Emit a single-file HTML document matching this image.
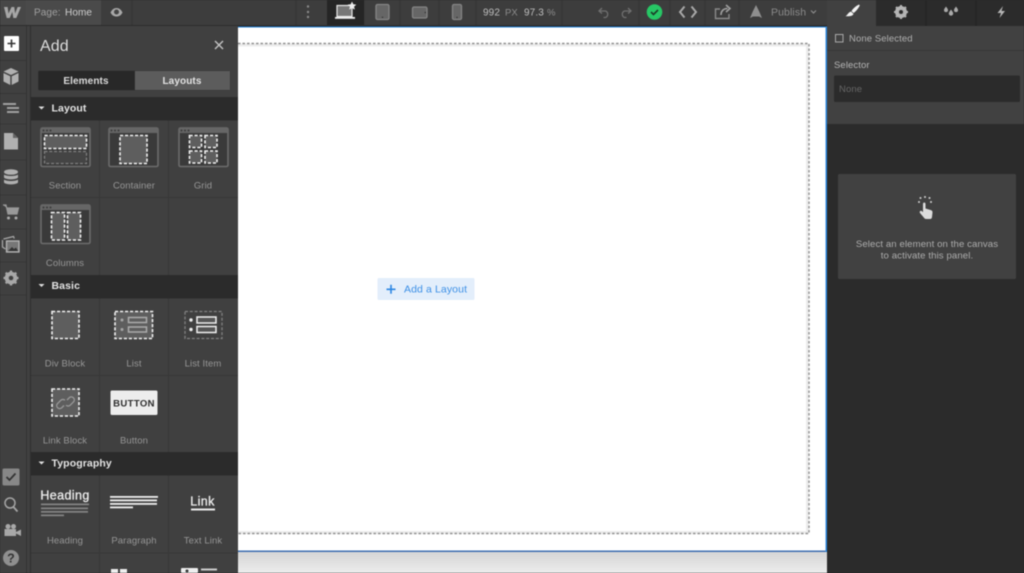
<!DOCTYPE html>
<html><head><meta charset="utf-8"><style>
html,body{margin:0;padding:0;background:#2b2b2b;overflow:hidden;width:1024px;height:573px}
svg{display:block;filter:blur(.4px)}
text{font-family:"Liberation Sans",sans-serif;font-size:9.5px;letter-spacing:.1px}
.l{fill:#969696;text-anchor:middle;font-size:9.5px}
.h{fill:#e4e4e4;font-size:10.5px;font-weight:700}
.d{fill:none;stroke:#f2f2f2;stroke-width:1.6;stroke-dasharray:3.2 1.8}
.f{fill:#5e5e5e}
.w{fill:#3a3a3a;stroke:#6c6c6c;stroke-width:1.6}
</style></head><body>
<svg width="1024" height="573" viewBox="0 0 1024 573" xmlns="http://www.w3.org/2000/svg">
<defs><linearGradient id="g" x1="0" y1="0" x2="0" y2="1"><stop offset="0" stop-color="#d6d6d6"/><stop offset="1" stop-color="#ececec"/></linearGradient></defs>
<!-- canvas -->
<rect x="238" y="26" width="589" height="547" fill="#fff"/>
<rect x="238" y="26" width="589" height="1.500" fill="#1f7fd6"/>
<rect x="238" y="552" width="589" height="21" fill="url(#g)"/>
<rect x="238" y="550.500" width="589" height="1.500" fill="#3e6fb0"/>
<rect x="825.500" y="26" width="1.500" height="526" fill="#2f8ae0"/>
<path d="M238 45H807.500V532.500H238" fill="none" stroke="#ececec" stroke-width="3"/>
<path d="M238 43.500H809V533.500H238" fill="none" stroke="#8f8f8f" stroke-width="1.400" stroke-dasharray="2.500 2"/>
<!-- add a layout -->
<rect x="377.500" y="278" width="97" height="22" rx="1.500" fill="#e3eefb"/>
<path d="M386.500 289.300h9M391 284.800v9" stroke="#2b86e3" stroke-width="1.600"/>
<text x="404" y="292.500" fill="#3d90e6" style="font-size:10.500px">Add a Layout</text>

<!-- top bar -->
<rect width="827" height="26" fill="#3d3d3d"/>
<rect y="25" width="827" height="1.500" fill="#2c2c2c"/>
<rect width="26" height="25" fill="#474747"/>
<rect x="26" width="75" height="25" fill="#4a4a4a"/>
<path d="M4 7h3.600l.9 6.500L11.500 7h2.800l.8 6.500L17.600 7H21l-4.700 11h-3l-1-6-2.600 6h-3z" fill="#a6a6a6"/>
<text x="34" y="15.500" fill="#a0a0a0" style="font-size:10px">Page:</text>
<text x="65" y="15.500" fill="#cfcfcf" style="font-size:10px">Home</text>
<path d="M110.500 12.500c1.500-3 3.500-4.500 6-4.500s4.500 1.500 6 4.500c-1.500 3-3.500 4-6 4s-4.500-1-6-4z" fill="#a8a8a8"/>
<circle cx="116.500" cy="12" r="2.500" fill="#444"/>
<path d="M132 0V25M296 0V25M364 0V25M400 0V25M439 0V25M476 0V25M562 0V25M639 0V25M670 0V25M705 0V25M739 0V25" stroke="#353535" stroke-width="1"/>
<circle cx="308" cy="6.500" r="1.200" fill="#8a8a8a"/><circle cx="308" cy="12" r="1.200" fill="#8a8a8a"/><circle cx="308" cy="17" r="1.200" fill="#8a8a8a"/>
<rect x="327" width="37" height="25" fill="#252525"/>
<rect x="337" y="5.500" width="15" height="11" fill="#777" stroke="#e8e8e8" stroke-width="1.200"/>
<rect x="335" y="17" width="20" height="1.800" fill="#eee"/>
<path d="M352 1.500l1.300 2.800 3 .3-2.200 2 .7 3-2.800-1.600-2.800 1.600.7-3-2.200-2 3-.3z" fill="#eee"/>
<rect x="376" y="4.500" width="13" height="15" rx="1.500" fill="#666" stroke="#858585" stroke-width="1.300"/>
<circle cx="382.500" cy="17.300" r=".7" fill="#333"/>
<rect x="412.500" y="7" width="14.500" height="11" rx="1.500" fill="#666" stroke="#858585" stroke-width="1.300"/>
<circle cx="425.300" cy="12.500" r=".7" fill="#333"/>
<rect x="452.500" y="4.500" width="9" height="15" rx="1.500" fill="#666" stroke="#858585" stroke-width="1.300"/>
<circle cx="457" cy="17.500" r=".7" fill="#333"/>
<text x="483" y="15.500" fill="#bdbdbd" style="font-size:10px">992</text>
<text x="505" y="15.500" fill="#8d8d8d" style="font-size:9.500px">PX</text>
<text x="524" y="15.500" fill="#bdbdbd" style="font-size:10px">97.3</text>
<text x="547" y="15.500" fill="#8d8d8d" style="font-size:9.500px">%</text>
<!-- undo redo -->
<path d="M602 8l-3 3 3 2.500M599.500 11h6a3.500 3.500 0 0 1 0 6.500h-2" fill="none" stroke="#6f6f6f" stroke-width="1.300"/>
<path d="M628 8l3 3-3 2.500M630.500 11h-6a3.500 3.500 0 0 0 0 6.500h2" fill="none" stroke="#6f6f6f" stroke-width="1.300"/>
<circle cx="654.500" cy="12" r="7.800" fill="#27c765"/>
<path d="M651 12l2.500 2.500 4.500-4.500" fill="none" stroke="#1c3c28" stroke-width="1.600"/>
<path d="M684.500 6.500L680 12l4.500 5.500M691.500 6.500L696 12l-4.500 5.500" fill="none" stroke="#a8a8a8" stroke-width="2"/>
<path d="M720 9h-4.500v9.500h13.500V14" fill="none" stroke="#8a8a8a" stroke-width="1.400"/>
<path d="M721 15c0-4 2.500-6.500 6.500-6.500M726 5l4 3.500-4 3.500" fill="none" stroke="#a0a0a0" stroke-width="1.600"/>
<path d="M756 5l3 6 3 7-3-1.500h-6L750 18l3-7z" fill="#8f8f8f"/>
<text x="771" y="15.500" fill="#8b8b8b" style="font-size:10.500px">Publish</text>
<path d="M811 10.500l2.500 2.500 2.500-2.500" fill="none" stroke="#8b8b8b" stroke-width="1.200"/>

<!-- right panel -->
<rect x="827" width="197" height="573" fill="#2b2b2b"/>
<rect x="827" y="26" width="197" height="98" fill="#414141"/>
<rect x="827" width="49" height="27" fill="#414141"/>
<path d="M926 0V26M976 0V26" stroke="#222" stroke-width="1"/>
<rect x="827" y="50" width="197" height="1" fill="#373737"/>
<path d="M859 4.500c-3 1.500-6 4-7.500 6.500l2 2c2.500-1.500 5-5 6.300-7.500z" fill="#f2f2f2"/>
<path d="M851 11.500l2.500 2.500c-1 2-3.500 2.500-8 2.200 2-1 2.500-3.700 5.500-4.700z" fill="#f2f2f2"/>
<circle cx="901" cy="12" r="4.500" fill="none" stroke="#b5b5b5" stroke-width="3"/>
<path d="M901 5v14M894 12h14M896 7l10 10M906 7L896 17" stroke="#b5b5b5" stroke-width="2"/>
<circle cx="901" cy="12" r="2" fill="#2b2b2b"/>
<path d="M951 7.500c1.500 2 2.200 3 2.200 4a2.200 2.200 0 0 1-4.400 0c0-1 .7-2 2.200-4z" fill="#aaa" transform="translate(0 2)"/>
<path d="M946 6.500c1.300 1.800 2 2.700 2 3.600a2 2 0 0 1-4 0c0-.9.7-1.800 2-3.600zM956 6.500c1.300 1.800 2 2.700 2 3.600a2 2 0 0 1-4 0c0-.9.700-1.800 2-3.600z" fill="#aaa"/>
<path d="M1003 6l-5.500 7h3.500l-1.500 5 5.500-7h-3.500z" fill="#b5b5b5"/>
<rect x="835.500" y="34.500" width="7.500" height="7.500" fill="none" stroke="#a8a8a8" stroke-width="1"/>
<text x="849" y="41.500" fill="#b0b0b0" style="font-size:9.500px">None Selected</text>
<text x="834" y="68" fill="#b5b5b5" style="font-size:9.500px">Selector</text>
<rect x="834" y="75.500" width="186" height="26.500" rx="1.500" fill="#2b2b2b"/>
<text x="839" y="92" fill="#666" style="font-size:9.500px">None</text>
<rect x="838" y="174" width="178" height="105" rx="1.500" fill="#414141"/>
<path d="M923 204c0-2 2.500-2 2.500 0v4.500l5 1.500c1.500.5 2 1 2 2.500l-.5 4.500c-.2 1.500-1 2-2 2h-4c-1 0-1.500-.5-2-1.200L920 213c-1-1.500.8-3 2-1.800l1 1z" fill="#dcdcdc"/>
<g fill="#cfcfcf"><circle cx="925" cy="197" r="1"/><circle cx="929.500" cy="198" r="1"/><circle cx="920.500" cy="198" r="1"/><circle cx="919" cy="202" r="1"/><circle cx="931" cy="202" r="1"/></g>
<text x="927" y="247" fill="#adadad" text-anchor="middle" style="font-size:9.600px">Select an element on the canvas</text>
<text x="927" y="258.500" fill="#adadad" text-anchor="middle" style="font-size:9.600px">to activate this panel.</text>

<!-- left rail -->
<rect y="26" width="31" height="547" fill="#404040"/>
<rect x="26" y="26" width="1" height="547" fill="#333"/>
<rect x="30" y="26" width="1.500" height="547" fill="#2f2f2f"/>
<rect x="4" y="36" width="15" height="15" rx="1" fill="#fff"/>
<path d="M7.500 43.500h8M11.500 39.500v8" stroke="#333" stroke-width="1.600"/>
<path d="M0 60.500H26M0 93.500H26M0 124H26M0 160H26M0 195H26M0 229H26M0 262H26M0 295H26" stroke="#363636" stroke-width="1"/>
<path d="M11 68l7.500 3.500-7.500 3.500-7.500-3.500z" fill="#b0b0b0"/>
<path d="M3.500 73l6.800 3.300V85l-6.800-3.500zM18.500 73l-6.800 3.300V85l6.800-3.500z" fill="#b0b0b0"/>
<rect x="3" y="103" width="13" height="2" fill="#a0a0a0"/><rect x="7" y="107" width="12" height="2" fill="#a0a0a0"/><rect x="7" y="111" width="12" height="2" fill="#a0a0a0"/>
<path d="M4 133h9l5 5v11.500H4z" fill="#b0b0b0"/>
<path d="M13 133l5 5h-5z" fill="#666"/>
<ellipse cx="11" cy="172" rx="7" ry="2.800" fill="#b0b0b0"/>
<path d="M4 174.500c2 2 12 2 14 0v3c-2 2.500-12 2.500-14 0zM4 179.500c2 2 12 2 14 0v3c-2 2.500-12 2.500-14 0z" fill="#b0b0b0"/>
<path d="M3 205h3l2 9h9l1.500-6H7" fill="#999" stroke="#999" stroke-width="1.200"/>
<circle cx="8.500" cy="218" r="1.500" fill="#aaa"/><circle cx="16" cy="218" r="1.500" fill="#aaa"/>
<path d="M3.500 239l10-2.500.8 2" fill="none" stroke="#a8a8a8" stroke-width="1.200"/>
<path d="M2.500 240v7l3 2" fill="none" stroke="#a8a8a8" stroke-width="1.200"/>
<rect x="6.500" y="241" width="12.500" height="11" fill="#777" stroke="#b5b5b5" stroke-width="1.300"/>
<path d="M8 251l4-4 2 2 2-1.500 2 3.500z" fill="#333"/>
<circle cx="11" cy="278" r="4.800" fill="none" stroke="#a8a8a8" stroke-width="3"/>
<path d="M11 270.500v15M3.500 278h15M5.700 272.700l10.600 10.600M16.300 272.700L5.700 283.300" stroke="#a8a8a8" stroke-width="2.200"/>
<circle cx="11" cy="278" r="2.300" fill="#404040"/>
<rect x="2.500" y="468.500" width="17" height="17" rx="1.500" fill="#878787"/>
<path d="M6.500 477l3 3 6-6.500" fill="none" stroke="#333" stroke-width="1.800"/>
<circle cx="10" cy="503" r="5" fill="none" stroke="#a5a5a5" stroke-width="1.500"/>
<path d="M13.500 507l4 4.500" stroke="#a5a5a5" stroke-width="1.800"/>
<circle cx="8" cy="526.500" r="2.500" fill="#a8a8a8"/><circle cx="13.500" cy="526.500" r="2.500" fill="#a8a8a8"/>
<rect x="4.500" y="529" width="11.500" height="7" fill="#a8a8a8"/><path d="M16 532l5-2.500v6.500l-5-2.500z" fill="#a8a8a8"/>
<circle cx="11" cy="558" r="8" fill="#8f8f8f"/>
<text x="11" y="562.500" fill="#333" text-anchor="middle" style="font-size:12.500px;font-weight:700">?</text>

<!-- add panel -->
<rect x="31" y="26" width="207" height="547" fill="#404040"/>
<text x="40" y="51" fill="#dcdcdc" style="font-size:16px">Add</text>
<path d="M215 41l8 8M223 41l-8 8" stroke="#c4c4c4" stroke-width="1.400"/>
<rect x="38" y="70.500" width="192.500" height="20" rx="1.500" fill="#333"/>
<rect x="38.500" y="71" width="96" height="19" rx="1" fill="#282828"/>
<rect x="135" y="71" width="95" height="19" fill="#5c5c5c"/>
<text x="86" y="84" fill="#dadada" text-anchor="middle" style="font-size:10px;font-weight:700">Elements</text>
<text x="182" y="84" fill="#e2e2e2" text-anchor="middle" style="font-size:10px;font-weight:700">Layouts</text>

<rect x="31" y="97" width="207" height="23.500" fill="#2b2b2b"/>
<rect x="31" y="275" width="207" height="23.500" fill="#2b2b2b"/>
<rect x="31" y="452" width="207" height="23.500" fill="#2b2b2b"/>
<path d="M38.500 106.500h6l-3 3zM38.500 284h6l-3 3zM38.500 461.500h6l-3 3z" fill="#ddd"/>
<text x="51.500" y="111.500" class="h">Layout</text>
<text x="51.500" y="289" class="h">Basic</text>
<text x="51.500" y="466.500" class="h">Typography</text>
<path d="M99.500 120.500V275M168.500 120.500V275M99.500 298.500V452M168.500 298.500V452M99.500 475.500V573M168.500 475.500V573M31 197.500H238M31 375.500H238M31 553H238" stroke="#383838" stroke-width="1"/>

<!-- section -->
<rect x="41" y="128" width="49" height="38.500" rx="1.500" class="w"/>
<rect x="41" y="128" width="49" height="5" fill="#666"/>
<rect x="44.500" y="135.500" width="42" height="13" class="f"/><rect x="44.500" y="135.500" width="42" height="13" class="d"/>
<rect x="44.500" y="151.500" width="42" height="12" fill="#444" stroke="#808080" stroke-width="1.300" stroke-dasharray="3 1.800"/>
<!-- container -->
<rect x="109" y="128" width="49" height="38.500" rx="1.500" class="w"/>
<rect x="109" y="128" width="49" height="5" fill="#666"/>
<rect x="120" y="135.500" width="27" height="28" class="f"/><rect x="120" y="135.500" width="27" height="28" class="d"/>
<!-- grid -->
<rect x="179" y="128" width="49" height="38.500" rx="1.500" class="w"/>
<rect x="179" y="128" width="49" height="5" fill="#666"/>
<g class="f"><rect x="190" y="136" width="11" height="11"/><rect x="205.500" y="136" width="11" height="11"/><rect x="190" y="151.500" width="11" height="11"/><rect x="205.500" y="151.500" width="11" height="11"/></g>
<rect x="189.500" y="135.500" width="12" height="12" class="d"/><rect x="205" y="135.500" width="12" height="12" class="d"/><rect x="189.500" y="151" width="12" height="12" class="d"/><rect x="205" y="151" width="12" height="12" class="d"/>
<!-- columns -->
<rect x="41" y="205" width="49" height="38.500" rx="1.500" class="w"/>
<rect x="41" y="205" width="49" height="5" fill="#666"/>
<rect x="51.500" y="212.500" width="13" height="27.500" class="f"/><rect x="51.500" y="212.500" width="13" height="27.500" class="d"/>
<rect x="67.500" y="212.500" width="13" height="27.500" class="f"/><rect x="67.500" y="212.500" width="13" height="27.500" class="d"/>
<g fill="#3c3c3c"><circle cx="43.500" cy="130.500" r="1"/><circle cx="47" cy="130.500" r="1"/><circle cx="50.500" cy="130.500" r="1"/><circle cx="111.500" cy="130.500" r="1"/><circle cx="115" cy="130.500" r="1"/><circle cx="118.500" cy="130.500" r="1"/><circle cx="181.500" cy="130.500" r="1"/><circle cx="185" cy="130.500" r="1"/><circle cx="188.500" cy="130.500" r="1"/><circle cx="43.500" cy="207.500" r="1"/><circle cx="47" cy="207.500" r="1"/><circle cx="50.500" cy="207.500" r="1"/></g>
<text x="65" y="188.500" class="l">Section</text>
<text x="134" y="188.500" class="l">Container</text>
<text x="203" y="188.500" class="l">Grid</text>
<text x="65" y="266" class="l">Columns</text>
<!-- div block -->
<rect x="52" y="311.500" width="27" height="27" class="f"/><rect x="52" y="311.500" width="27" height="27" class="d"/>
<!-- list -->
<rect x="115" y="311.500" width="37.500" height="27" class="f"/><rect x="115" y="311.500" width="37.500" height="27" class="d"/>
<circle cx="122" cy="320" r="1.500" fill="#a5a5a5"/><circle cx="122" cy="329.500" r="1.500" fill="#a5a5a5"/>
<rect x="128.500" y="317.500" width="18" height="5" fill="none" stroke="#ababab" stroke-width="1.500"/>
<rect x="128.500" y="327" width="18" height="5" fill="none" stroke="#ababab" stroke-width="1.500"/>
<!-- list item -->
<rect x="185" y="311.500" width="37" height="27" fill="none" stroke="#808080" stroke-width="1.300" stroke-dasharray="3 1.800"/>
<circle cx="191" cy="320" r="1.700" fill="#eee"/><circle cx="191" cy="329.500" r="1.700" fill="#eee"/>
<rect x="197" y="317" width="19" height="6" fill="#555" stroke="#f0f0f0" stroke-width="1.500"/>
<rect x="197" y="326.500" width="19" height="6" fill="#555" stroke="#f0f0f0" stroke-width="1.500"/>
<text x="65" y="366.500" class="l">Div Block</text>
<text x="134" y="366.500" class="l">List</text>
<text x="203" y="366.500" class="l">List Item</text>
<!-- link block -->
<rect x="52" y="389" width="27" height="27" class="f"/><rect x="52" y="389" width="27" height="27" class="d"/>
<path d="M64 405l-2.500 2.500a3 3 0 0 1-4.200-4.200l3.500-3.500a3 3 0 0 1 4.200 0M67 399.500l2.500-2.500a3 3 0 0 1 4.200 4.200l-3.500 3.500a3 3 0 0 1-4.200 0" transform="translate(0 .5)" fill="none" stroke="#999" stroke-width="1.300"/>
<rect x="110.500" y="390.500" width="47" height="24.500" rx="1.500" fill="#ededed"/>
<text x="134" y="406.500" fill="#2c2c2c" text-anchor="middle" style="font-size:9.500px;font-weight:700;letter-spacing:.4px">BUTTON</text>
<text x="65" y="443.500" class="l">Link Block</text>
<text x="134" y="443.500" class="l">Button</text>
<!-- heading -->
<text x="65" y="499.500" fill="#ececec" stroke="#ececec" stroke-width=".3" text-anchor="middle" style="font-size:12.500px;letter-spacing:.4px">Heading</text>
<g fill="#858585"><rect x="41" y="503.500" width="48" height="1.700"/><rect x="41" y="507.500" width="47" height="1.700"/><rect x="41" y="511" width="47" height="1.700"/><rect x="41" y="514.500" width="23" height="1.700"/></g>
<g fill="#eee"><rect x="110" y="496" width="48" height="1.800"/><rect x="110" y="499.500" width="47" height="1.800"/><rect x="110" y="503" width="47" height="1.800"/><rect x="110" y="506.500" width="23" height="1.800"/></g>
<text x="202.500" y="505.500" fill="#ececec" stroke="#ececec" stroke-width=".3" text-anchor="middle" style="font-size:12.500px;letter-spacing:.4px">Link</text>
<rect x="191" y="508.500" width="24" height="2" fill="#e8e8e8"/>
<text x="65" y="543.500" class="l">Heading</text>
<text x="134" y="543.500" class="l">Paragraph</text>
<text x="203" y="543.500" class="l">Text Link</text>
<!-- bottom row peeks -->
<rect x="111" y="569" width="7" height="4" fill="#eee"/><rect x="120" y="569" width="7" height="4" fill="#eee"/>
<rect x="181" y="568" width="17" height="5" rx="1" fill="#eee"/><circle cx="187" cy="571" r="1.500" fill="#333"/>
<rect x="201" y="568.500" width="16" height="2" fill="#ccc"/>
</svg>
</body></html>
